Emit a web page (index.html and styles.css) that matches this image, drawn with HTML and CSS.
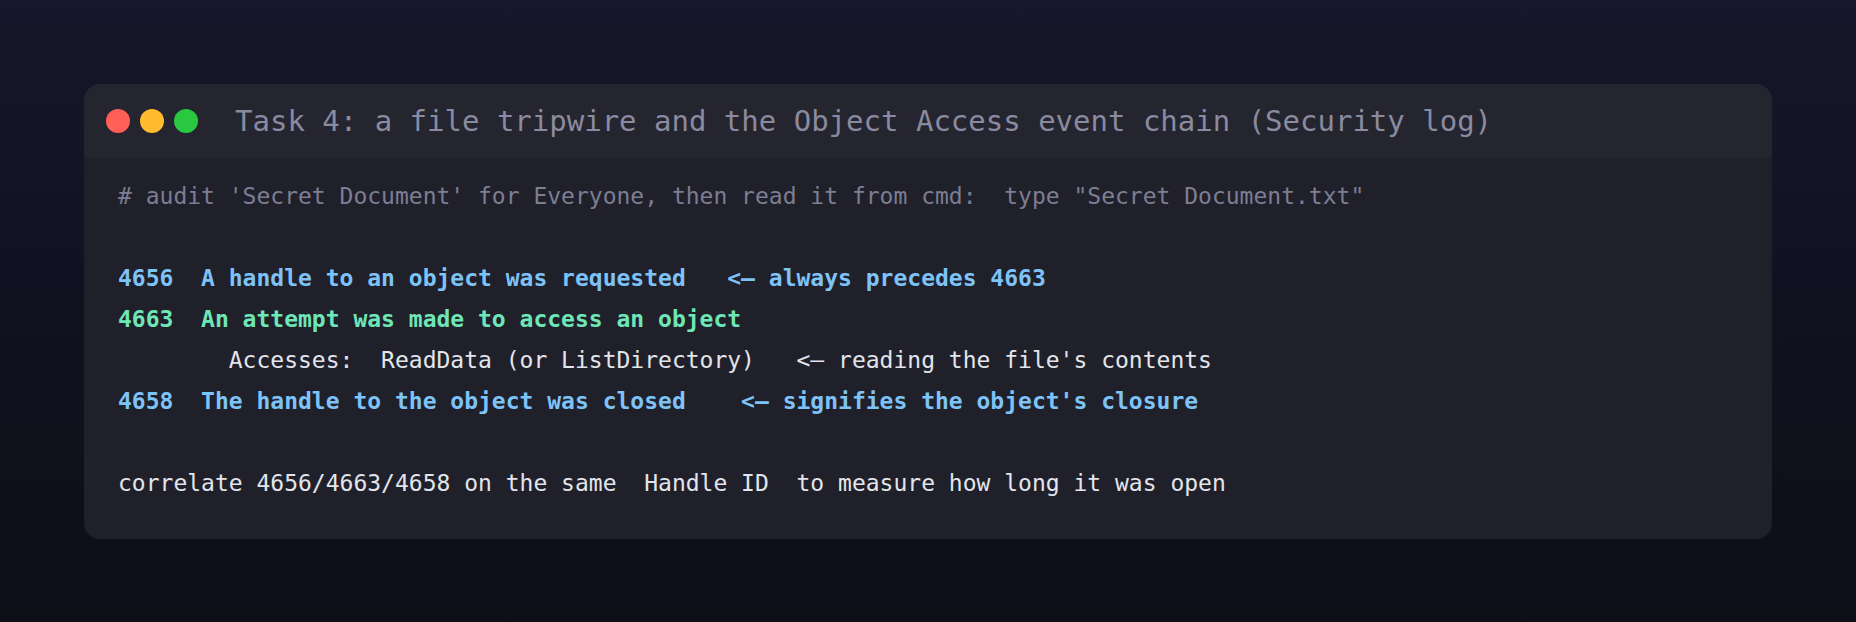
FILE: index.html
```html
<!DOCTYPE html>
<html>
<head>
<meta charset="utf-8">
<link rel="stylesheet" href="styles.css">
</head>
<body>
<div class="page">
  <div class="window">
    <div class="titlebar">
      <div class="dots">
        <span class="dot red"></span>
        <span class="dot yellow"></span>
        <span class="dot green"></span>
      </div>
      <div class="title">Task 4: a file tripwire and the Object Access event chain (Security log)</div>
    </div>
    <div class="body">
      <div class="line comment"># audit 'Secret Document' for Everyone, then read it from cmd:  type "Secret Document.txt"</div>
      <div class="line blank"></div>
      <div class="line bold blue">4656  A handle to an object was requested   &lt;– always precedes 4663</div>
      <div class="line bold green-t">4663  An attempt was made to access an object</div>
      <div class="line plain">        Accesses:  ReadData (or ListDirectory)   &lt;– reading the file's contents</div>
      <div class="line bold blue">4658  The handle to the object was closed    &lt;– signifies the object's closure</div>
      <div class="line blank"></div>
      <div class="line plain">correlate 4656/4663/4658 on the same  Handle ID  to measure how long it was open</div>
    </div>
  </div>
</div>
</body>
</html>
```

FILE: styles.css
```css
html, body {
  margin: 0;
  padding: 0;
}
body {
  width: 1856px;
  height: 622px;
  background: linear-gradient(180deg, #16172a 0%, #111221 45%, #0d0e16 100%);
  font-family: "DejaVu Sans Mono", "Liberation Mono", monospace;
  overflow: hidden;
}
.page {
  padding: 84px;
}
.window {
  border-radius: 16px;
  overflow: hidden;
  background: #20202b;
}
.titlebar {
  height: 74px;
  background: #25252f;
  display: flex;
  align-items: center;
  padding-left: 22px;
}
.dots {
  display: flex;
  gap: 10px;
}
.dot {
  width: 24px;
  height: 24px;
  border-radius: 50%;
  display: block;
}
.dot.red { background: #ff5f57; }
.dot.yellow { background: #febc2e; }
.dot.green { background: #28c840; }
.title {
  margin-left: 37px;
  font-size: 29px;
  color: #8a8aa0;
  white-space: pre;
}
.body {
  padding: 18px 34px 35px 34px;
}
.line {
  font-size: 23px;
  line-height: 41px;
  height: 41px;
  white-space: pre;
}
.comment { color: #7d7d93; }
.plain { color: #e3e5ec; }
.bold { font-weight: bold; }
.blue { color: #7ec3f7; }
.green-t { color: #6ee7b7; }
```
